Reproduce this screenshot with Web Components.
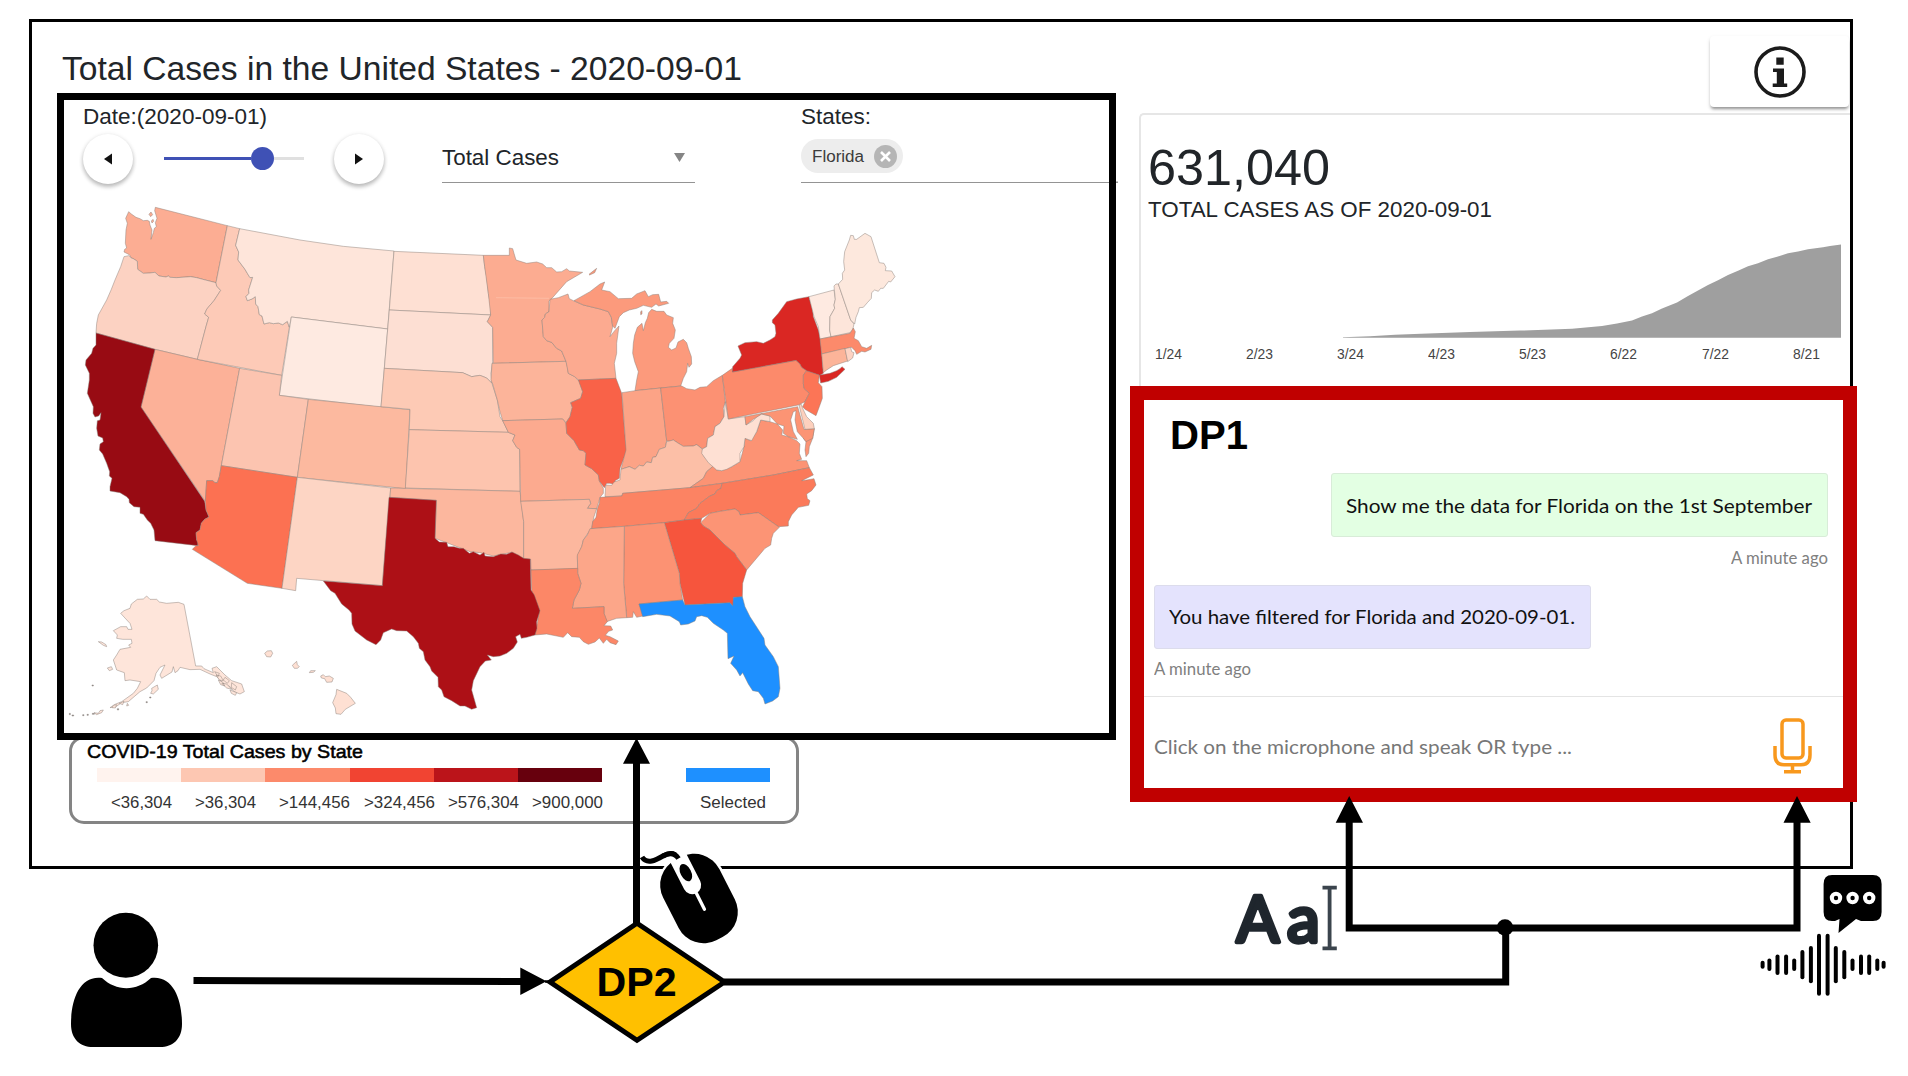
<!DOCTYPE html>
<html lang="en">
<head>
<meta charset="utf-8">
<title>Total Cases in the United States</title>
<style>
html,body{margin:0;padding:0;background:#fff}
body{width:1908px;height:1076px;overflow:hidden;font-family:"Liberation Sans",Arial,sans-serif;color:#212529}
</style>
</head>
<body>
<interaction-diagram></interaction-diagram>
<script>
const define = (name, html, setup) => {
  const tpl = document.createElement('template');
  tpl.innerHTML = html;
  customElements.define(name, class extends HTMLElement {
    connectedCallback() {
      if (this.shadowRoot) return;
      this.attachShadow({mode: 'open'}).appendChild(tpl.content.cloneNode(true));
      if (setup) setup(this, this.shadowRoot);
    }
  });
};

/* One line of text set to an exact width: w = width, s = font size, h = line height */
define('fit-line', `<style>
:host{display:block;flex:none;white-space:nowrap}
span{display:inline-block;transform-origin:0 50%}
</style><span><slot></slot></span>`, (host, root) => {
  const w = +host.getAttribute('w'), h = host.getAttribute('h');
  host.style.cssText += `;width:${w}px;height:${h}px;line-height:${h}px;font-size:${host.getAttribute('s')}px`;
  const span = root.querySelector('span');
  const real = span.getBoundingClientRect().width;
  if (real) span.style.transform = `scaleX(${w / real})`;
});

define('round-button', `<style>
:host{display:flex;width:50px;height:50px;border-radius:50%;background:#fff;box-shadow:0 3px 4px rgba(0,0,0,.22),0 1px 5px rgba(0,0,0,.12);align-items:center;justify-content:center;flex:none}
:host([next]) svg{transform:scaleX(-1)}
svg{display:block}
</style><svg width="8" height="12"><path d="M0 6L8 .5V11.5Z" fill="#111"/></svg>`);

define('date-slider', `<style>
:host{display:flex;align-items:center;width:140px;height:24px;flex:none}
.on{width:87px;height:3px;background:#3f51b5}
.dot{width:23px;height:23px;border-radius:50%;background:#3f51b5;flex:none}
.off{flex:1;height:2.5px;background:#e0e0e0}
</style><div class="on"></div><div class="dot"></div><div class="off"></div>`);

define('metric-select', `<style>
:host{display:flex;box-sizing:border-box;width:253px;height:51px;border-bottom:1.6px solid #949494;align-items:center;justify-content:space-between;padding:1px 10.5px 0 0}
svg{display:block}
</style><fit-line w="117" s="21.5" h="24"><slot></slot></fit-line><svg width="11" height="9"><path d="M0 0H11L5.5 9Z" fill="#858585"/></svg>`);

define('state-chip', `<style>
:host{display:flex;box-sizing:border-box;width:102px;height:34px;border-radius:17px;background:#ededed;align-items:center;justify-content:space-between;padding:0 6px 0 11px;color:#3c3c3c}
svg{display:block}
</style><fit-line w="52" s="17.3" h="20"><slot></slot></fit-line>
<svg width="23" height="23" viewBox="0 0 23 23"><circle cx="11.5" cy="11.5" r="11.5" fill="#b5b5b5"/><path d="M7 7L16 16M16 7L7 16" stroke="#fff" stroke-width="2.6"/></svg>`);

/* Each layer lists outlines at three units per pixel from its own corner */
const layers = [
 [60,180,[
  ['#fcad93','M206 95L214 102 228 112 240 116 250 122 262 121 268 124 270 135 276 150 273 178 280 158 283 145 289 140 286 128 291 115 284 92 286 82 502 137 468 308 436 300 410 293 392 290 350 293 330 292 325 288 318 291 297 288 285 277 270 279 250 280 233 268 232 244 220 236 214 234 208 224 192 216 194 208 200 204 196 190 198 150 202 130 197 115Z'],
  ['#fcad93','M273 96L278 104 272 110 267 103ZM279 118L281 124 276 129 274 123Z'],
  ['#fcd2c2','M192 230L206 227 214 234 220 236 232 244 233 268 250 280 270 279 285 277 297 288 318 291 325 288 330 292 350 293 392 290 410 293 436 300 468 308 470 318 482 331 462 362 448 378 440 388 434 402 446 412 438 440 412 538 285 508 108 459 110 430 115 405 140 360 154 328 165 300 182 260Z'],
  ['#fcb198','M285 508L412 538 539 565 484 857 478 890 472 908 465 908 458 902 440 902 436 964 243 681Z'],
  ['#fdcab7','M502 137L539 146 527 196 536 216 534 240 555 268 562 280 570 293 578 292 566 330 567 340 558 350 562 362 576 357 586 350 587 372 594 380 598 404 606 408 612 432 628 428 640 431 655 429 668 434 682 424 688 442 665 586 412 538 438 440 446 412 434 402 440 388 448 378 462 362 482 331 470 318 468 308Z'],
  ['#fee5da','M539 146L720 180 850 199 1002 213 983 447 694 411 688 442 682 424 668 434 655 429 640 431 628 428 612 432 606 408 598 404 594 380 587 372 586 350 576 357 562 362 558 350 567 340 566 330 578 292 570 293 562 280 555 268 534 240 536 216 527 196Z'],
  ['#feeae1','M694 411L983 447 963 682 658 646Z'],
  ['#fcc4b0','M539 565L665 586 658 646 745 658 712 892 484 857Z'],
  ['#fcb99f','M745 658L1050 689 1037 926 712 892Z'],
  ['#980b13','M108 459L285 508 243 681 434 964 438 990 447 1011 434 1018 424 1030 420 1050 408 1058 410 1080 415 1085 413 1097 285 1082 282 1050 272 1030 262 1020 250 1003 240 1000 240 982 222 980 208 968 207 958 200 950 180 938 150 933 150 920 156 895 148 888 149 875 140 850 128 822 118 810 120 792 130 785 128 774 114 768 110 745 112 722 120 720 123 698 116 708 105 711 99 700 100 680 82 640 88 600 88 580 76 555 78 540 95 520 99 505 108 495Z'],
  ['#fc7152','M484 857L712 892 666 1225 562 1210 397 1108 408 1097 415 1097 410 1080 408 1058 420 1050 424 1030 434 1018 447 1011 438 990 436 964 440 902 458 902 465 908 472 908 478 890Z'],
  ['#fdd5c4','M712 892L992 924 967 1217 710 1195 707 1232 666 1225Z']
 ]],
 [370,220,[
  ['#fee0d3','M72 94L340 106 344 140 350 170 355 220 362 255 362 285 58 270Z'],
  ['#fddfd3','M58 270L362 285 352 305 368 322 368 425 363 460 366 490 350 474 330 466 305 470 278 458 43 445Z'],
  ['#fdcab5','M43 445L278 458 305 470 330 466 350 474 366 490 382 540 390 590 400 605 415 637 118 629 120 568 33 560Z'],
  ['#fdc4ae','M118 629L415 637 435 645 428 662 440 682 449 688 450 814 106 804Z'],
  ['#fcb79e','M62 804L450 814 461 905 461 1018 425 997 370 1008 330 998 300 995 235 970 195 955 199 841 60 832Z'],
  ['#fcac91','M340 106L418 106 418 84 428 86 432 100 438 120 470 130 500 126 518 132 530 143 545 143 560 156 575 155 590 146 598 153 638 157 590 185 545 236 537 243 537 275 526 282 524 292 516 300 520 350 530 362 545 367 560 385 575 393 588 424 370 430 368 322 352 305 362 285 355 220 344 140Z'],
  ['#fcb49a','M366 430L588 424 592 440 595 460 614 470 628 485 638 515 632 535 602 548 607 562 600 590 588 608 578 597 398 602 390 575 382 540 368 492 363 480Z'],
  ['#fcaa8f','M398 602L578 597 588 610 590 640 612 662 628 690 640 692 648 700 645 735 665 746 685 765 688 783 700 805 700 820 690 832 685 850 680 866 652 865 662 850 658 838 452 844 449 688 440 682 428 662 435 645 415 637Z'],
  ['#fcb79e','M452 844L658 838 662 850 652 865 680 866 672 890 665 925 655 938 640 960 636 978 622 1010 623 1046 483 1050 482 1018 461 1018 461 905Z'],
  ['#fcaa90','M540 238L565 233 594 222 598 236 612 243 640 255 690 267 715 275 724 292 728 322 720 350 734 332 747 318 740 370 740 400 733 430 738 475 625 480 614 470 595 460 588 424 575 393 560 385 545 367 530 362 520 350 516 300 524 292 526 282 537 275Z'],
  ['#fc9a7c','M612 242L660 215 690 192 704 186 695 210 720 215 745 236 785 235 800 222 825 212 835 230 848 224 866 223 872 246 890 244 896 250 866 258 858 252 845 262 820 256 800 265 778 270 760 278 748 290 735 325 728 318 724 292 715 275 690 267 640 255ZM657 163L680 145 674 158 659 165ZM812 275L816 272 816 282 812 284Z'],
  ['#f96248','M625 480L738 475 755 520 762 610 766 660 770 690 764 708 750 745 748 775 735 782 736 794 720 790 710 790 703 803 688 783 685 765 665 746 645 735 648 700 640 692 628 690 612 662 590 640 588 608 600 590 607 562 602 548 632 535 638 515Z']
 ]],
 [540,220,[
  ['#fc9a7c','M326 278L335 268 350 274 372 274 380 285 400 293 398 310 406 330 402 355 388 370 385 382 395 390 408 384 414 366 430 358 440 368 445 385 454 410 455 432 447 442 443 430 440 455 430 475 422 498 285 512 290 480 295 455 284 425 278 400 280 370 284 345 292 322 306 310 310 332 316 308 322 295Z'],
  ['#fca386','M246 518L285 512 362 504 380 662 376 682 358 688 348 710 338 712 334 728 320 726 310 738 298 736 285 748 268 740 243 748 248 728 258 690 254 630Z'],
  ['#fc9173','M362 504L425 498 440 506 465 510 480 502 500 500 520 482 547 466 556 545 550 565 552 590 540 610 525 620 520 645 503 655 500 680 487 687 470 674 460 678 430 679 412 668 400 660 388 664 380 662Z'],
  ['#fcbfa7','M195 830L197 795 215 796 222 786 240 780 243 748 268 740 285 748 298 736 310 738 320 726 334 728 338 712 348 710 358 688 376 682 380 665 400 660 412 668 430 679 460 678 470 674 487 687 492 710 520 738 500 755 490 775 450 803 248 820 246 828Z'],
  ['#fc9374','M520 738L530 750 545 752 575 740 600 725 612 680 615 655 632 662 650 635 662 600 690 605 712 612 728 630 725 645 745 650 770 662 780 672 778 700 785 718 770 722 800 722 808 743 700 765 545 790 450 803 490 775 500 755ZM823 626L818 655 808 680 806 700 798 710 795 690 798 665 790 655Z'],
  ['#fee0d3','M556 545L565 597 615 590 618 615 640 602 650 590 665 582 690 588 690 605 662 600 650 635 635 662 615 655 612 680 600 700 600 725 575 740 560 748 545 752 530 750 505 728 492 710 485 700 487 687 500 680 503 655 520 645 525 620 540 610 552 590Z'],
  ['#fc9474','M615 590L773 560 792 628 823 626 818 655 798 665 790 655 772 635 765 600 768 572 760 575 752 600 760 635 772 658 745 650 730 640 732 618 712 612 690 588 665 582 640 598 618 615Z'],
  ['#fdd0bd','M777 555L784 553 788 565 800 590 820 610 823 626 795 628Z'],
  ['#fc8a6b','M547 466L577 445 578 456 768 421 780 432 785 442 800 452 790 465 790 490 792 505 808 520 795 545 775 555 565 597Z'],
  ['#fc7556','M800 452L838 465 835 488 846 500 847 535 838 560 828 587 795 568 788 560 795 545 808 520 792 505 790 490 790 465Z'],
  ['#da2723','M577 456L578 440 600 415 605 405 594 378 615 368 650 365 670 370 690 360 705 350 708 340 705 315 697 308 697 300 715 280 740 245 770 237 807 230 818 270 820 290 835 330 841 357 845 400 850 460 841 465 870 460 890 452 900 446 906 440 915 448 890 472 865 484 842 489 838 465 800 452 785 442 780 432 768 421Z'],
  ['#feeae1','M807 230L882 210 886 238 882 255 884 265 870 290 869 330 873 350 840 357 835 320 822 290Z'],
  ['#fde5da','M882 198L888 192 895 192 932 300 942 312 938 330 930 338 873 350 869 330 870 290 884 265 882 255 886 238Z'],
  ['#fde8dd','M895 192L908 178 907 160 914 150 911 125 914 95 928 60 932 46 940 47 943 58 950 58 975 40 993 50 1018 128 1032 130 1038 142 1036 152 1055 153 1065 170 1052 186 1046 184 1030 205 1022 205 1015 214 1004 210 995 218 994 235 982 248 970 262 958 263 955 275 948 292 944 312 932 300Z'],
  ['#fc8a6b','M840 357L930 340 940 324 946 335 942 355 955 362 965 380 980 385 995 376 993 388 975 396 965 394 950 403 945 392 935 382 845 402Z'],
  ['#fcb499','M845 402L915 385 923 423 880 437 860 450 850 458Z'],
  ['#fdd3c3','M915 386L932 382 935 395 942 398 938 414 923 425Z'],
  ['#fc8363','M180 832L246 828 248 820 450 803 546 790 543 805 530 812 525 822 510 828 480 850 470 865 445 878 433 900 373 908 253 919 155 926 158 905 168 892 172 866 178 850Z'],
  ['#fb7a5a','M546 790L700 765 808 743 820 765 785 782 800 780 822 776 828 795 815 812 800 822 802 836 810 842 806 856 775 862 755 885 745 905 745 918 715 920 655 878 600 885 597 875 585 867 540 874 510 880 485 895 433 900 445 878 470 865 480 850 510 828 525 822 530 812 543 805Z'],
  ['#fc9475','M482 908L510 880 540 874 585 867 597 875 600 885 655 878 718 922 700 940 695 955 692 975 675 985 620 1050 605 1030 590 1010 585 1000 555 975 530 950 510 930 490 918Z'],
  ['#f6553d','M373 908L433 900 485 895 482 908 490 918 510 930 530 950 555 975 585 1000 590 1010 605 1030 620 1050 608 1090 607 1130 580 1132 582 1150 578 1157 570 1148 435 1155 420 1090 418 1060Z']
 ]],
 [300,440,[
  ['#fc9273','M973 259L1093 248 1138 400 1140 430 1148 480 1017 492 1026 510 1028 528 1010 532 1000 515 998 532 980 533 971 430Z'],
  ['#fca689','M870 266L973 259 971 430 980 533 950 535 920 545 912 520 912 500 817 505 822 480 838 450 843 430 833 400 833 385 832 345 845 320 850 300 862 285Z'],
  ['#fc8767','M693 390L833 385 833 400 843 430 838 450 822 480 817 505 912 500 912 520 922 545 912 557 932 558 938 570 926 574 916 586 930 590 955 603 948 614 930 608 920 598 910 610 898 594 885 606 865 613 850 605 838 592 815 590 803 578 790 592 740 582 705 585 712 550 718 510 695 452Z'],
  ['#1e90ff','M1017 492L1148 480 1155 495 1290 488 1298 497 1300 472 1327 470 1335 500 1350 530 1392 595 1395 615 1420 650 1435 680 1440 745 1435 770 1418 783 1395 792 1390 775 1375 755 1358 752 1345 732 1328 698 1320 708 1310 690 1292 670 1302 648 1284 656 1282 580 1270 570 1240 550 1222 532 1205 527 1190 530 1185 543 1165 552 1142 555 1138 545 1110 528 1070 523 1028 530Z'],
  ['#ad1016','M267 172L409 181 405 295 418 306 440 307 444 320 462 320 478 325 490 325 508 340 520 335 540 345 552 337 555 348 580 350 602 342 620 343 636 336 655 345 671 355 691 357 693 450 703 465 712 490 720 512 710 545 711 565 705 585 680 592 664 595 660 583 647 590 652 606 640 625 620 640 600 648 580 650 562 645 574 660 556 663 540 680 520 722 515 750 530 803 515 808 495 798 480 798 455 782 432 770 425 750 415 740 414 712 395 693 390 680 375 660 370 635 358 625 355 610 340 590 320 573 290 572 275 567 250 578 242 600 228 614 200 600 165 573 156 552 155 520 147 510 125 492 105 460 92 452 70 423 247 437Z']
 ]],
 [50,560,[
  ['#fee5da','M262 118L280 117 290 108 300 118 320 118 328 126 350 130 385 127 402 133 437 318 455 318 462 326 490 338 486 325 500 320 525 345 545 362 575 372 583 395 570 402 552 395 540 380 522 372 500 350 480 342 450 328 420 329 390 322 384 332 375 338 370 320 366 336 335 355 330 345 345 315 330 322 318 340 312 362 290 384 270 395 235 425 215 428 198 440 180 443 195 433 215 425 250 400 262 385 272 365 240 360 225 362 223 338 200 330 190 300 200 285 210 268 242 262 236 255 246 250 244 238 218 238 200 235 202 225 190 212 212 200 230 200 234 208 246 208 240 190 236 186 212 160 222 152 240 145 244 132Z'],
  ['#fee5da','M145 245L155 246 168 254 170 260 160 256ZM172 324L184 320 188 328 178 332ZM305 385L322 375 325 388 310 402 302 400 306 392ZM498 345L512 348 520 362 508 360ZM515 370L530 372 545 388 530 384ZM540 390L560 398 556 406 544 400ZM525 352L538 362 532 370 520 360ZM505 360L518 366 524 378 512 374ZM545 368L560 380 556 390 544 382ZM494 335L508 340 504 350ZM160 450L150 452 145 460 132 458 140 464 155 458ZM190 436L200 434 196 444 186 443ZM208 430L222 424 218 434ZM232 430L236 436 230 438Z'],
  ['#999','M126 375h4v3h-4zM58 460h3v4h-3zM66 465h5v3h-5zM98 464h4v3h-4zM111 463h4v3h-4zM202 446h4v4h-4zM288 425h4v3h-4zM299 411h4v3h-4zM127 460h6v3h-6z'],
  ['#fee0d3','M644 280L652 273 664 272 668 280 662 291 650 290ZM727 316L740 304 742 314 748 320 742 325 733 325ZM778 338L782 332 796 332 790 337ZM812 348L820 344 826 350 838 348 850 355 846 366 830 367 824 356 814 354ZM860 388L890 400 902 412 916 430 886 448 873 463 858 461 856 444 848 428 858 404Z']
 ]]
];
define('us-map', `<style>:host,svg{display:block}path{stroke:#8a7f7a;stroke-opacity:.75;stroke-width:1.9;stroke-linejoin:round}</style>
<svg width="1045" height="546" viewBox="64 187 1045 546"></svg>`, (host, root) => {
  root.querySelector('svg').innerHTML = layers.map(([x, y, shapes]) =>
    `<g transform="translate(${x} ${y}) scale(.33333)">` +
    shapes.map(([c, d]) => `<path fill="${c}" d="${d}"/>`).join('') + '</g>').join('') +
    '<path d="M496 297.7L549 298.3" style="stroke:#fdc4ad;stroke-width:.9"/>';
});

define('map-panel', `<style>
:host{display:block;box-sizing:border-box;width:1059px;height:647px;border:7px solid #000;position:relative;z-index:1;background:#fff}
.bar{display:flex;height:87px;padding:5px 0 0 19px;box-sizing:border-box}
.date{width:359px}.metric{width:359px;padding-top:27px}.states{flex:1}
.row{display:flex;align-items:center;margin-top:4.5px}
.row date-slider{margin:0 30px 0 31px}
.field{display:flex;height:43px;margin-top:10px;border-bottom:1.6px solid #949494}
</style>
<div class="bar">
<div class="date"><fit-line w="184" s="22" h="24">Date:(2020-09-01)</fit-line><div class="row"><round-button></round-button><date-slider></date-slider><round-button next></round-button></div></div>
<div class="metric"><metric-select>Total Cases</metric-select></div>
<div class="states"><fit-line w="70" s="22" h="24">States:</fit-line><div class="field"><state-chip>Florida</state-chip></div></div>
</div><us-map></us-map>`);

define('map-legend', `<style>
:host{display:block;box-sizing:border-box;width:730px;height:88px;border:3px solid #848484;border-radius:15px;padding:3px 0 0 15px;background:#fff}
.title{color:#000;-webkit-text-stroke:.55px #000}
.keys{display:flex;margin-top:6px;padding-left:10px}
.key{width:84.2px;flex:none}
.key:last-child{margin-left:84px}
i{display:block;height:14px}
fit-line{margin-left:14px;margin-top:11px;color:#333}
fit-line.title{margin:0;color:#000}
</style>
<fit-line class="title" w="276" s="19" h="20">COVID-19 Total Cases by State</fit-line>
<div class="keys"></div>`, (host, root) => {
  root.querySelector('.keys').innerHTML = [
    ['#fff3ee','&lt;36,304',61],['#fdc7b2','&gt;36,304',61],['#fc8a6b','&gt;144,456',71],['#f14432','&gt;324,456',71],
    ['#bb141a','&gt;576,304',71],['#67000d','&gt;900,000',71],['#1e90ff','Selected',66]
  ].map(([c, t, w]) => `<div class="key"><i style="background:${c}"></i><fit-line w="${w}" s="16.8" h="20">${t}</fit-line></div>`).join('');
});

define('info-button', `<style>
:host{display:flex;width:139px;height:71px;background:#fff;align-items:center;justify-content:center;border-radius:4px;box-shadow:0 3px 3px -1px rgba(0,0,0,.35),0 2px 4px rgba(0,0,0,.12)}
svg{display:block}
</style><svg width="52" height="52" viewBox="0 0 52 52"><circle cx="26" cy="26" r="24" fill="none" stroke="#1b1b1b" stroke-width="3.6"/><path fill="#1b1b1b" d="M22.3 11.5h7.4v7.2h-7.4zM19 22.4h11v15.2h3.2v3.4H18.7v-3.4h4.1V26H19z"/></svg>`);

define('cases-card', `<style>
:host{display:block;box-sizing:border-box;width:711px;height:273px;border:2px solid #e6e6e6;border-right:0;border-bottom:0;border-radius:5px 0 0 0;padding:28px 0 0 7px}
.sub{margin-top:5px}
svg{display:block;margin:8px 0 0 -8px}
.ticks{display:flex;padding:5px 0 0 7px;color:#444}
.ticks div{width:91.1px;flex:none}
.ticks div:last-child{width:40px}
</style>
<fit-line w="182" s="50.5" h="50">631,040</fit-line>
<fit-line class="sub" w="344" s="22" h="24">TOTAL CASES AS OF 2020-09-01</fit-line>
<svg width="709" height="110" viewBox="1140 230 709 110"><path fill="#9f9f9f" d="M1343 337.2L1370 336.3 1395 334.8 1421 333.7 1470 332 1520 330.6 1572 328.7 1602 326 1617 323.5 1632 320.5 1642 316.5 1652 313.3 1662 308.5 1677 302.5 1688 296 1698 290.5 1708 285 1718 280.3 1728 275 1738 270.8 1748 266.3 1758 263.3 1768 259.3 1778 256.5 1788 253.3 1798 251.5 1808 249.2 1823 247.2 1830 246 1841 244.6V337.8H1343Z"/></svg>
<div class="ticks"></div>`, (host, root) => {
  root.querySelector('.ticks').innerHTML = ['1/24','2/23','3/24','4/23','5/23','6/22','7/22','8/21']
    .map(t => `<div><fit-line w="27" s="15.3" h="18">${t}</fit-line></div>`).join('');
});

define('chat-bubble', `<style>
:host{display:flex;box-sizing:border-box;height:64px;align-items:center;padding-left:14px;border:1px solid #dcdcec;border-radius:3px;background:#e4e3fd;color:#111}
:host([mine]){background:#e3ffe3;border-color:#d8ecd8}
</style><slot></slot>`);

define('mic-icon', `<style>:host,svg{display:block}</style>
<svg width="40" height="56" viewBox="0 0 40 56" fill="none" stroke="#f8981d" stroke-width="3.5"><rect x="10" y="2" width="21" height="38" rx="4"/><path d="M3 28V37Q3 46.8 12 46.8H29Q38 46.800 38 37V28M20.500 47V53M12 53.700H29"/></svg>`);

define('chat-panel', `<style>
:host{display:block;box-sizing:border-box;width:727px;height:416px;border:14px solid #c00000;background:#fff;position:relative;z-index:1;padding-top:15px}
.tag{margin-left:26px;font-weight:bold;color:#000}
.chat{font-family:Lato,Carlito,sans-serif;color:#808080;padding:18px 15px 0 10px;display:flex;flex-direction:column;align-items:flex-start}
.r{align-self:flex-end}
.input{display:flex;box-sizing:border-box;height:92px;margin-top:17px;border-top:1.5px solid #e4e4e4;align-items:center;padding:6px 31px 0 10px;justify-content:space-between;font-family:Lato,Carlito,sans-serif;color:#777}
</style>
<fit-line class="tag" w="78" s="41.5" h="40">DP1</fit-line>
<div class="chat">
<chat-bubble class="r" mine style="width:497px"><fit-line w="466" s="19.8" h="26">Show me the data for Florida on the 1st September</fit-line></chat-bubble>
<fit-line class="r" style="margin-top:11px" w="97" s="16.6" h="20">A minute ago</fit-line>
<chat-bubble style="width:437px;margin-top:17px"><fit-line style="margin-bottom:2px" w="406" s="19.8" h="26">You have filtered for Florida and 2020-09-01.</fit-line></chat-bubble>
<fit-line style="margin-top:10px" w="97" s="16.6" h="20">A minute ago</fit-line>
</div>
<div class="input"><fit-line w="418" s="20" h="26">Click on the microphone and speak OR type ...</fit-line><mic-icon></mic-icon></div>`);

define('covid-dashboard', `<style>
:host{display:grid;grid-template-columns:1098px 720px;box-sizing:border-box;width:1824px;height:850px;border:3px solid #000;background:#fff}
.left{padding:26px 0 0 25px}
.left>fit-line{margin-left:5px}
map-panel{margin-top:5px}
map-legend{margin:-4px 0 0 12px}
.right{padding-top:14px}
info-button{margin-left:580px}
cases-card{margin:6px 0 0 9px}
</style>
<div class="left"><fit-line w="680" s="34" h="40">Total Cases in the United States - 2020-09-01</fit-line><map-panel></map-panel><map-legend></map-legend></div>
<div class="right"><info-button></info-button><cases-card></cases-card><chat-panel></chat-panel></div>`);

const wave = [[1762.6,4],[1769.4,6.3],[1777.5,10.3],[1786.1,10.3],[1794.2,6.3],[1802.4,14.6],[1810.9,18.6],[1819,31],[1827.6,31],[1835.8,18.6],[1844.3,14.6],[1852.5,6.3],[1861,10.3],[1869.2,10.3],[1877.3,6.3],[1883.6,4]]
  .map(([x, h]) => `<path d="M${x} ${964.7 - h + 2}V${964.7 + h - 2}"/>`).join('');

define('interaction-diagram', `<style>
:host{display:block;position:relative;width:1908px;height:1076px;background:#fff;overflow:hidden}
.board{padding:19px 0 0 29px}
svg{position:absolute;left:0;top:0;z-index:2}
</style>
<div class="board"><covid-dashboard></covid-dashboard></div>
<svg width="1908" height="1076" viewBox="0 0 1908 1076">
<path d="M1116 182.200H1118" stroke="#949494" stroke-width="1.6"/>
<ellipse cx="125.800" cy="945.300" rx="32.300" ry="32.500"/>
<path d="M102 978C116 991.500 137 991.500 151 978C174 975 182 1001 182 1024C182 1039 173 1047 160 1047H93C80 1047 71 1039 71 1024C71 1001 79 975 102 978Z"/>
<g fill="none" stroke="#000" stroke-width="7">
<path d="M193.500 980.500L522 981.500M636.500 925V760M724 982H1505.700V928M1349.200 820V928H1797V820"/></g>
<path d="M545 981.500H553" stroke="#000" stroke-width="2.500"/>
<path d="M546.500 981.300L520.300 967.500V995ZM636.500 738L623 763.700H650ZM1349.200 796L1335.700 822.700H1363ZM1797 796L1783.500 822.700H1810.700Z"/>
<circle cx="1505" cy="927.500" r="8.300"/>
<path d="M637 923.200L550 982 637 1040.300 724.500 982Z" fill="#ffc000" stroke="#000" stroke-width="5"/>
<text x="636.500" y="996" text-anchor="middle" font-family="Liberation Sans, Arial, sans-serif" font-weight="bold" font-size="41.500" textLength="80" lengthAdjust="spacingAndGlyphs">DP2</text>
<path d="M642 857C647 865 656 860 663 856C670 852 675 853 678 858" fill="none" stroke="#000" stroke-width="5"/>
<g transform="translate(699 898.500) rotate(-27)">
<rect x="-34" y="-47.500" width="68" height="95" rx="31" fill="#fff"/>
<rect x="-31.500" y="-45" width="63" height="90" rx="28"/>
<path d="M-9 -51H9V-15A9 9 0 0 1 -9 -15Z" fill="#fff"/><path d="M0 -8V12" stroke="#fff" stroke-width="3.300" stroke-linecap="round"/>
<ellipse cx="0" cy="-29" rx="5.300" ry="9.300"/></g>
<path d="M663 856C670 852 675 853 678.500 858.500" fill="none" stroke="#000" stroke-width="5"/>
<text y="941.500" font-family="Lato, sans-serif" font-size="63" fill="#1f262d" stroke="#1f262d" stroke-width="4.500" stroke-linejoin="round"><tspan x="1236.500">A</tspan><tspan x="1287" font-size="66">a</tspan></text>
<path d="M1322.500 887.700H1336.800M1322.500 948.300H1336.800M1329.600 887V949" fill="none" stroke="#3b444d" stroke-width="3.800"/>
<path d="M1832 875H1873Q1881.600 875 1881.600 884V912Q1881.600 921 1873 921H1861L1856 919 1838.500 933 1839.500 919 1835 921H1832Q1823.600 921 1823.600 912V884Q1823.600 875 1832 875Z"/>
<g stroke="#fff" stroke-width="4"><circle cx="1836" cy="898" r="4.200"/><circle cx="1852.600" cy="898" r="4.200"/><circle cx="1869.200" cy="898" r="4.200"/></g>
<g stroke="#000" stroke-width="4" stroke-linecap="round">${wave}</g>
</svg>`);
</script>
</body>
</html>
